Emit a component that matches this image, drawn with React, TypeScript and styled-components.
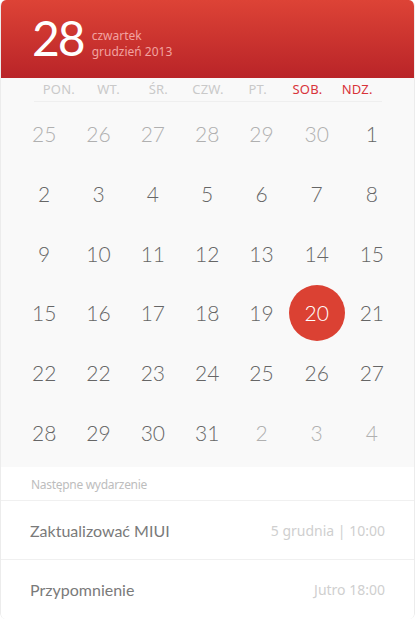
import React from "react";
import styled, { createGlobalStyle } from "styled-components";

const Global = createGlobalStyle`
  html, body { margin: 0; padding: 0; background: #fff; }
  body { font-family: "Noto Sans", "Open Sans", sans-serif; }
  * { box-sizing: border-box; }
`;

const Card = styled.div`
  width: 415px;
  height: 619px;
  border-radius: 6px;
  overflow: hidden;
  display: flex;
  flex-direction: column;
  background: #fff;
  border-left: 1px solid #ececec;
  border-right: 1px solid #ececec;
`;

const Header = styled.header`
  height: 78px;
  background: linear-gradient(to bottom, #dd4336 0%, #b92428 100%);
  display: flex;
  align-items: center;
  padding-left: 31px;
  gap: 8px;
`;

const BigDay = styled.div`
  font-family: "Lato", sans-serif;
  font-weight: 400;
  font-size: 48px;
  line-height: 1;
  color: #fff;
  letter-spacing: -2px;
  margin-top: -1px;
`;

const DateInfo = styled.div`
  display: flex;
  flex-direction: column;
  font-size: 12px;
  line-height: 16px;
  color: #f2a3a0;
  margin-top: 10px;
`;

const Calendar = styled.section`
  background: #f9f9f9;
  padding: 0 15px 5px 16px;
`;

const Weekdays = styled.div`
  display: grid;
  grid-template-columns: repeat(7, 1fr);
  height: 24px;
  align-items: center;
  margin: 0 17px 0 17px;
  border-bottom: 1px solid #efefef;
  padding-bottom: 1px;
`;

const Weekday = styled.div<{ $weekend?: boolean }>`
  text-align: center;
  font-size: 13px;
  letter-spacing: 0.2px;
  color: ${(p) => (p.$weekend ? "#d8343a" : "#c9c9c9")};
  margin: 0 -17px;
`;

const Days = styled.div`
  display: grid;
  grid-template-columns: repeat(7, 1fr);
  grid-auto-rows: 59.7px;
  padding-top: 2px;
`;

const Day = styled.div<{ $muted?: boolean; $selected?: boolean }>`
  display: flex;
  align-items: center;
  justify-content: center;
  font-family: "Lato", sans-serif;
  font-weight: 300;
  font-size: 21px;
  color: ${(p) => (p.$selected ? "#fff" : p.$muted ? "#b0b0b0" : "#666")};
`;

const Circle = styled.span`
  width: 56px;
  height: 56px;
  border-radius: 50%;
  background: #db4133;
  display: flex;
  align-items: center;
  justify-content: center;
`;

const Footer = styled.section`
  flex: 1;
  display: flex;
  flex-direction: column;
  background: #fff;
`;

const SectionLabel = styled.div`
  height: 34px;
  display: flex;
  align-items: center;
  padding: 0 30px;
  font-size: 12px;
  letter-spacing: -0.3px;
  color: #bdbdbd;
  border-bottom: 1px solid #f0f0f0;
  padding-top: 1px;
`;

const EventRow = styled.div<{ $last?: boolean }>`
  height: 59px;
  display: flex;
  align-items: center;
  justify-content: space-between;
  padding: 0 29px 0 29px;
  border-bottom: ${(p) => (p.$last ? "none" : "1px solid #f0f0f0")};
`;

const EventTitle = styled.span`
  font-family: "Lato", sans-serif;
  font-size: 16px;
  color: #7a7a7a;
`;

const EventTime = styled.span`
  font-size: 14px;
  color: #cfcfcf;
`;

const weekdays = ["PON.", "WT.", "ŚR.", "CZW.", "PT.", "SOB.", "NDZ."];

type D = { n: number; muted?: boolean; selected?: boolean };
const days: D[] = [
  ...[25, 26, 27, 28, 29, 30].map((n) => ({ n, muted: true })),
  { n: 1 },
  ...[2, 3, 4, 5, 6, 7, 8, 9, 10, 11, 12, 13, 14, 15, 15, 16, 17, 18, 19].map((n) => ({ n })),
  { n: 20, selected: true },
  ...[21, 22, 22, 23, 24, 25, 26, 27, 28, 29, 30, 31].map((n) => ({ n })),
  ...[2, 3, 4].map((n) => ({ n, muted: true })),
];

export default function App() {
  return (
    <>
      <Global />
      <Card>
        <Header>
          <BigDay>28</BigDay>
          <DateInfo>
            <span>czwartek</span>
            <span>grudzień 2013</span>
          </DateInfo>
        </Header>
        <Calendar>
          <Weekdays>
            {weekdays.map((w, i) => (
              <Weekday key={w} $weekend={i >= 5}>
                {w}
              </Weekday>
            ))}
          </Weekdays>
          <Days>
            {days.map((d, i) => (
              <Day key={i} $muted={d.muted} $selected={d.selected}>
                {d.selected ? <Circle>{d.n}</Circle> : d.n}
              </Day>
            ))}
          </Days>
        </Calendar>
        <Footer>
          <SectionLabel>Następne wydarzenie</SectionLabel>
          <EventRow>
            <EventTitle>Zaktualizować MIUI</EventTitle>
            <EventTime>5 grudnia | 10:00</EventTime>
          </EventRow>
          <EventRow $last>
            <EventTitle>Przypomnienie</EventTitle>
            <EventTime>Jutro 18:00</EventTime>
          </EventRow>
        </Footer>
      </Card>
    </>
  );
}
